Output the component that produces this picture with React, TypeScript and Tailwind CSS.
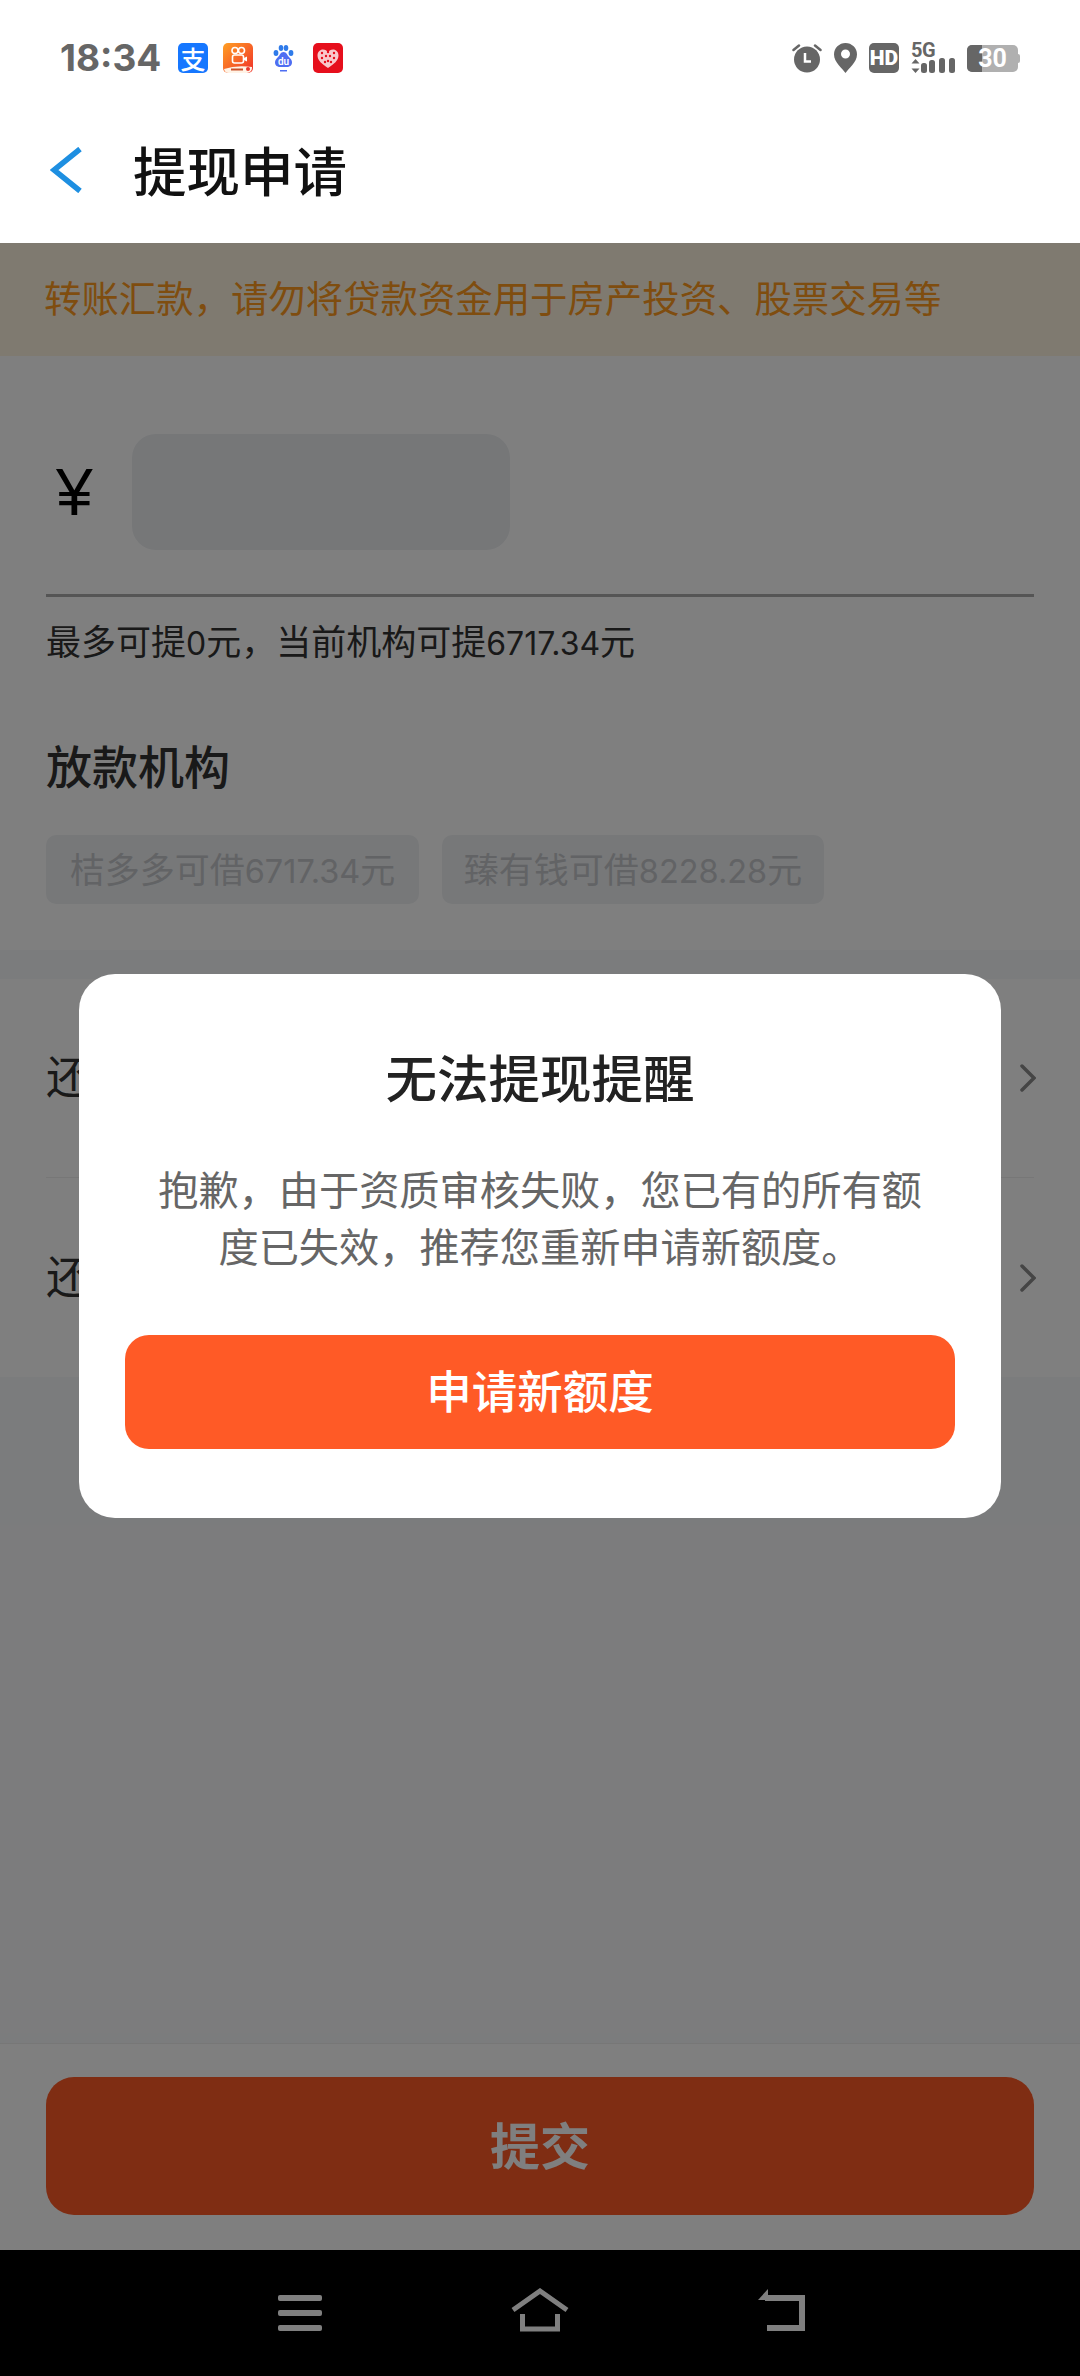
const cjk = 'font-["Noto_Sans_CJK_SC","Noto_Sans",sans-serif]';

const AlipayIcon = () => (
  <div className="flex h-[30px] w-[30px] items-center justify-center rounded-[5px] bg-[#1677ff] text-[25px] leading-none font-medium text-white">
    支
  </div>
);

const KuaishouIcon = () => (
  <svg width="30" height="30" viewBox="0 0 30 30">
    <defs>
      <linearGradient id="ks" x1="0" y1="0" x2="1" y2="1">
        <stop offset="0" stopColor="#ffa024" />
        <stop offset="1" stopColor="#f0302a" />
      </linearGradient>
    </defs>
    <rect width="30" height="30" rx="5" fill="url(#ks)" />
    <circle cx="12" cy="7.5" r="3" fill="none" stroke="#fff" strokeWidth="1.6" />
    <circle cx="18.5" cy="7.5" r="3" fill="none" stroke="#fff" strokeWidth="1.6" />
    <rect x="9.5" y="12" width="11" height="8" rx="2" fill="none" stroke="#fff" strokeWidth="1.6" />
    <path d="M21 15l3-1.5v5l-3-1.5z" fill="#fff" />
    <path d="M1 26q12-4 28-2v1a5 5 0 0 1-5 5H6a5 5 0 0 1-5-4z" fill="#fff3e6" />
    <path d="M8 26.5h12" stroke="#c8502a" strokeWidth="2" />
    <circle cx="25" cy="26" r="2" fill="#e8382c" />
  </svg>
);

const BaiduIcon = () => (
  <svg width="30" height="30" viewBox="0 0 30 30">
    <ellipse cx="8" cy="10" rx="2.4" ry="3" fill="#2f7bea" />
    <ellipse cx="13" cy="5" rx="2.3" ry="3" fill="#2f7bea" />
    <ellipse cx="18" cy="5" rx="2.3" ry="3" fill="#2f7bea" />
    <ellipse cx="23" cy="10" rx="2.4" ry="3" fill="#2f7bea" />
    <path d="M15.5 9c-3 0-3.5 3-5.500 5-2 2-3 3.500-3 5.500 0 3 2.500 4.500 5 4.500h7c2.500 0 5-1.500 5-4.500 0-2-1-3.500-3-5.500-2-2-2.500-5-5.500-5z" fill="#4e6ef2" />
    <text x="15.500" y="22" textAnchor="middle" fontSize="10" fontWeight="600" fontFamily="Roboto, sans-serif" fill="#fff">
      du
    </text>
    <rect x="12" y="27" width="7" height="1.500" fill="#4e6ef2" />
  </svg>
);

const HeartIcon = () => (
  <svg width="30" height="30" viewBox="0 0 30 30">
    <rect width="30" height="30" rx="5" fill="#e60f1c" />
    <path d="M15 25C9 21 4.500 17.500 4.500 12.500 4.500 9 7 6.500 10 6.500c2.200 0 4 1 5 3 1-2 2.800-3 5-3 3 0 5.500 2.500 5.500 6 0 5-4.500 8.500-10.500 12.500z" fill="#f9c9cc" />
    {[[9, 10], [13, 13], [17, 13], [21, 10], [9, 15], [15, 18], [21, 15], [12, 19], [18, 19], [15, 9]].map(([cx, cy], i) => (
      <circle key={i} cx={cx} cy={cy} r="1.200" fill="#e60f1c" />
    ))}
  </svg>
);

const AlarmIcon = () => (
  <svg width="30" height="30" viewBox="0 0 30 30">
    <path d="M1.500 7L7 2.500M28.500 7L23 2.500" stroke="#666" strokeWidth="2.500" strokeLinecap="round" />
    <circle cx="15" cy="16.500" r="13" fill="#666" />
    <path d="M13 10v8.500h6" fill="none" stroke="#fff" strokeWidth="2.500" />
  </svg>
);

const PinIcon = () => (
  <svg width="23" height="30" viewBox="0 0 23 30">
    <path fillRule="evenodd" d="M11.500 30C9 26 0 19.500 0 11.500a11.500 11.500 0 0 1 23 0C23 19.500 14 26 11.500 30zm0-14.500a4.500 4.500 0 1 0 0-9 4.500 4.500 0 0 0 0 9z" fill="#666" />
  </svg>
);

const SignalIcon = () => (
  <div className="flex h-[30px] w-[44px] flex-col">
    <div className="h-[15px] font-['Roboto',sans-serif] text-[20px] leading-[15px] font-bold tracking-[-0.5px] text-[#666]">5G</div>
    <svg width="44" height="15" viewBox="0 0 44 15">
      <path d="M4.500 1l4 4.500h-8zM4.500 15L.5 10.500h8z" fill="#666" />
      <rect x="10" y="5" width="6" height="10" rx="2.500" fill="#666" />
      <rect x="18" y="2" width="6" height="13" rx="2.500" fill="#666" />
      <rect x="28" y="0" width="6" height="15" rx="2.500" fill="#666" />
      <rect x="38" y="0" width="6" height="15" rx="2.500" fill="#666" />
    </svg>
  </div>
);

const BatteryIcon = () => (
  <div className="flex items-center">
    <div className="relative flex h-[27px] w-[51px] items-center justify-center overflow-hidden rounded-[5px] bg-[#b0b0b0]">
      <div className="absolute inset-y-0 left-0 w-[15px] bg-[#666]" />
      <span className="relative font-['Roboto',sans-serif] text-[25px] leading-[27px] font-bold text-white">30</span>
    </div>
    <div className="h-[9px] w-[2px] rounded-r-sm bg-[#b0b0b0]" />
  </div>
);

const StatusBar = () => (
  <div className="flex h-[97px] items-start justify-between bg-white pt-[43px] pr-[60px] pl-[60px]">
    <div className="flex items-center">
      <span className="mr-[17px] w-[101px] font-['Inter',sans-serif] text-[37px] leading-[30px] font-bold whitespace-nowrap text-[#666]">18:34</span>
      <div className="flex gap-[15px]">
        <AlipayIcon />
        <KuaishouIcon />
        <BaiduIcon />
        <HeartIcon />
      </div>
    </div>
    <div className="flex items-center gap-[12px]">
      <AlarmIcon />
      <PinIcon />
      <div className="flex h-[30px] w-[30px] items-center justify-center rounded-[5px] bg-[#666] font-['Roboto',sans-serif] text-[21px] leading-none font-black text-white">
        HD
      </div>
      <SignalIcon />
      <BatteryIcon />
    </div>
  </div>
);

const Chevron = () => (
  <svg width="16" height="28" viewBox="0 0 16 28" fill="none" stroke="#8a8a8a" strokeWidth="3.500" strokeLinecap="round" className="mr-[-2px]">
    <path d="M2 2l12 12L2 26" />
  </svg>
);

const Row = ({ label, last }: { label: string; last?: boolean }) => (
  <div className={`flex h-[199px] items-center justify-between ${last ? '' : 'border-b border-[#eeeeee]'}`}>
    <span className="mt-[-6px] text-[45px] leading-[60px] text-[#333]">{label}</span>
    <Chevron />
  </div>
);

export default function App() {
  return (
    <div className={`flex h-[2376px] w-[1080px] flex-col overflow-hidden bg-[#f7f8fa] ${cjk}`}>
      <StatusBar />

      <div className="flex h-[146px] items-center bg-white pl-[50px]">
        <svg width="32" height="46" viewBox="0 0 32 46" fill="none" stroke="#1e8fe1" strokeWidth="5.500">
          <path d="M30 2L4 23l26 21" />
        </svg>
        <h1 className="ml-[51px] pb-[3px] text-[53.500px] leading-[70px] font-medium text-[#111]">提现申请</h1>
      </div>

      <div className="relative flex flex-1 flex-col">
        <div className="flex h-[113px] items-center bg-[#fff5e1] pr-[46px] pb-[6px] pl-[44px] text-[37.400px] leading-[50px] text-[#ff9a1e]">
          转账汇款，请勿将贷款资金用于房产投资、股票交易等
        </div>

        <div className="bg-white px-[46px] pt-[78px] pb-[46px]">
          <div className="flex items-center">
            <span className="w-[86px] pl-[10px] font-['Liberation_Sans',sans-serif] text-[66px] leading-[80px] font-medium text-black">¥</span>
            <div className="h-[116px] w-[378px] rounded-[24px] bg-[#eceef1]" />
          </div>
          <div className="mt-[44px] h-[3px] bg-[#aaaaaa]" />
          <p className="mt-[23px] text-[35px] leading-[40px] text-[#333]">
            最多可提<span className="font-['Inter',sans-serif] text-[32px]">0</span>元，当前机构可提<span className="font-['Inter',sans-serif] text-[32px]">6717.34</span>元
          </p>
          <h2 className="mt-[70px] text-[46px] leading-[60px] font-medium text-[#333]">放款机构</h2>
          <div className="mt-[41px] flex gap-[23px]">
            <div className="flex h-[69px] w-[373px] items-center justify-center rounded-[10px] bg-[#eff1f3] text-[35px] text-[#c4c6ca]">
              <span>桔多多可借<span className="font-['Inter',sans-serif] text-[32.500px]">6717.34</span>元</span>
            </div>
            <div className="flex h-[69px] w-[382px] items-center justify-center rounded-[10px] bg-[#eff1f3] text-[35px] text-[#c4c6ca]">
              <span>臻有钱可借<span className="font-['Inter',sans-serif] text-[32.500px]">8228.28</span>元</span>
            </div>
          </div>
        </div>

        <div className="mt-[29px] bg-white px-[46px]">
          <Row label="还" />
          <Row label="还" last />
        </div>

        <div className="flex-1" />

        <div className="h-[207px] border-t border-[#eeeeee] bg-white px-[46px] pt-[33px]">
          <div className="flex h-[138px] items-center justify-center rounded-[28px] bg-[#ff5a26] pb-[6px] text-[50px] font-bold text-white">
            提交
          </div>
        </div>

        <div className="flex h-[126px] items-start bg-black pt-[38px] pl-[278px]">
          <svg width="44" height="44" viewBox="0 0 44 44" className="mt-[7px]" fill="#fff">
            <rect y="0" width="44" height="6" rx="2" />
            <rect y="15" width="44" height="6" rx="2" />
            <rect y="30" width="44" height="6" rx="2" />
          </svg>
          <svg width="58" height="44" viewBox="0 0 58 44" fill="none" stroke="#fff" strokeWidth="5" className="ml-[189px]">
            <path d="M2 22L29 3l27 19" />
            <path d="M11.500 26v15h35V26" />
          </svg>
          <svg width="48" height="44" viewBox="0 0 48 44" fill="none" stroke="#fff" strokeWidth="6" className="ml-[188px]">
            <path d="M8 10h37v30H10" />
            <path d="M11 1L1 12h10z" fill="#fff" stroke="none" />
          </svg>
        </div>

        {/* dim layer + alert dialog */}
        <div className="absolute inset-0 flex justify-center bg-black/50 pt-[731px]">
          <div className="flex h-[544px] w-[922px] flex-col items-center rounded-[36px] bg-white px-[46px]">
            <h3 className="mt-[66px] text-[51.500px] leading-[72px] font-medium text-[#222]">无法提现提醒</h3>
            <p className="mt-[47px] w-[780px] text-center text-[40.200px] leading-[57px] text-[#666]">
              抱歉，由于资质审核失败，您已有的所有额度已失效，推荐您重新申请新额度。
            </p>
            <button className="mt-[62px] h-[114px] w-[830px] rounded-[24px] bg-[#ff5a26] pb-[6px] text-[45.500px] font-medium text-white">
              申请新额度
            </button>
          </div>
        </div>
      </div>
    </div>
  );
}
